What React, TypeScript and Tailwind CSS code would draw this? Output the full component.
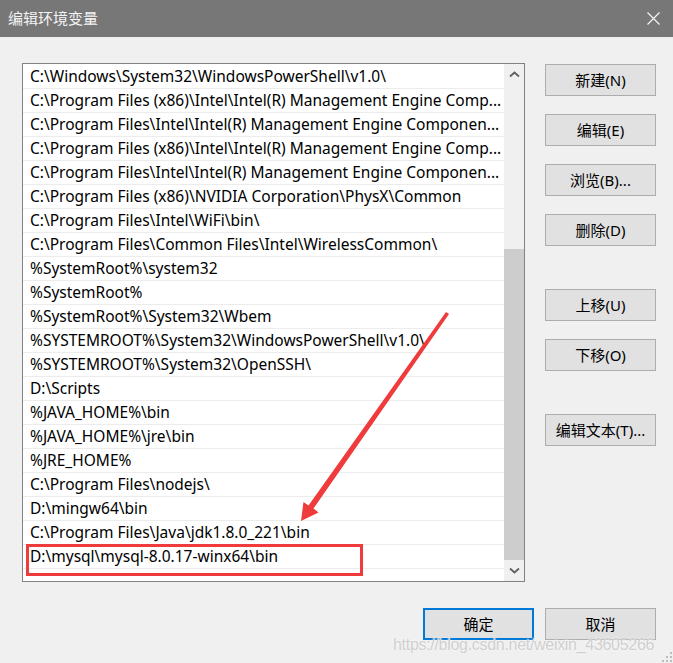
import React from 'react';

const paths: string[] = [
  'C:\\Windows\\System32\\WindowsPowerShell\\v1.0\\',
  'C:\\Program Files (x86)\\Intel\\Intel(R) Management Engine Comp...',
  'C:\\Program Files\\Intel\\Intel(R) Management Engine Componen...',
  'C:\\Program Files (x86)\\Intel\\Intel(R) Management Engine Comp...',
  'C:\\Program Files\\Intel\\Intel(R) Management Engine Componen...',
  'C:\\Program Files (x86)\\NVIDIA Corporation\\PhysX\\Common',
  'C:\\Program Files\\Intel\\WiFi\\bin\\',
  'C:\\Program Files\\Common Files\\Intel\\WirelessCommon\\',
  '%SystemRoot%\\system32',
  '%SystemRoot%',
  '%SystemRoot%\\System32\\Wbem',
  '%SYSTEMROOT%\\System32\\WindowsPowerShell\\v1.0\\',
  '%SYSTEMROOT%\\System32\\OpenSSH\\',
  'D:\\Scripts',
  '%JAVA_HOME%\\bin',
  '%JAVA_HOME%\\jre\\bin',
  '%JRE_HOME%',
  'C:\\Program Files\\nodejs\\',
  'D:\\mingw64\\bin',
  'C:\\Program Files\\Java\\jdk1.8.0_221\\bin',
  'D:\\mysql\\mysql-8.0.17-winx64\\bin',
];

const font = { fontFamily: '"Noto Sans", "Noto Sans CJK SC", sans-serif' };

const DialogButton: React.FC<{ label: string; primary?: boolean; className?: string }> = ({
  label,
  primary,
  className = '',
}) => (
  <button
    className={`w-[111px] h-[32px] bg-[#e1e1e1] text-[15px] text-black flex items-center justify-center ${
      primary ? 'border-2 border-[#0078d7]' : 'border border-[#adadad]'
    } ${className}`}
  >
    {label}
  </button>
);

const Chevron: React.FC<{ down?: boolean }> = ({ down }) => (
  <svg width="11" height="7" viewBox="0 0 11 7">
    <path
      d={down ? 'M1 1.5 L5.5 5.5 L10 1.5' : 'M1 5.5 L5.5 1.5 L10 5.5'}
      fill="none"
      stroke="#606060"
      strokeWidth="1.8"
    />
  </svg>
);

export default function App() {
  return (
    <div className="relative w-[673px] h-[663px] bg-[#f0f0f0] overflow-hidden" style={font}>
      {/* Title bar */}
      <div className="h-[37px] bg-[#777777] flex items-center justify-between pl-2 pr-[13px]">
        <span className="text-[15px] text-[#f4f4f4]">编辑环境变量</span>
        <svg width="13" height="13" viewBox="0 0 13 13">
          <path d="M0.5 0.5 L12.5 12.5 M12.5 0.5 L0.5 12.5" stroke="#f4f4f4" strokeWidth="1.2" />
        </svg>
      </div>

      <div className="flex pl-[22px] pt-[26px]">
        {/* Path list */}
        <div className="w-[503px] h-[519px] border border-[#828282] bg-white flex">
          <div className="flex-1 pt-px min-w-0">
            {paths.map((p, i) => (
              <div
                key={i}
                className="h-6 border-b border-[#ececec] pl-[7px] pr-px pt-px flex items-center text-[15.5px] text-black whitespace-nowrap overflow-hidden"
              >
                {p}
              </div>
            ))}
          </div>
          <div className="w-[20px] bg-[#f0f0f0] flex flex-col">
            <div className="h-[21px] flex items-center justify-center">
              <Chevron />
            </div>
            <div className="h-[164px]" />
            <div className="flex-1 bg-[#cdcdcd]" />
            <div className="h-[21px] flex items-center justify-center">
              <Chevron down />
            </div>
          </div>
        </div>

        {/* Side buttons */}
        <div className="ml-[20px] pt-px flex flex-col">
          <DialogButton label="新建(N)" />
          <DialogButton label="编辑(E)" className="mt-[18px]" />
          <DialogButton label="浏览(B)..." className="mt-[18px]" />
          <DialogButton label="删除(D)" className="mt-[18px]" />
          <DialogButton label="上移(U)" className="mt-[43px]" />
          <DialogButton label="下移(O)" className="mt-[18px]" />
          <DialogButton label="编辑文本(T)..." className="mt-[43px]" />
        </div>
      </div>

      {/* Bottom buttons */}
      <div className="flex justify-end gap-[11px] pr-[17px] mt-[26px]">
        <DialogButton label="确定" primary />
        <DialogButton label="取消" />
      </div>

      {/* Annotation: red box */}
      <div className="absolute left-[26px] top-[544px] w-[337px] h-[32px] border-[3px] border-[#ef3b3b]" />

      {/* Annotation: arrow */}
      <svg className="absolute left-0 top-0 pointer-events-none" width="673" height="663">
        <polygon
          points="446,312 449,314 313.5,508.5 318.5,512.5 301,521 303.5,502 308.5,505.5"
          fill="#ef3b3b"
        />
      </svg>

      {/* Watermark */}
      <div
        className="absolute left-[393px] top-[633px] text-[16px] tracking-[-0.3px] text-[#cfcfcf] whitespace-nowrap"
        style={{ fontFamily: '"Liberation Sans", Arial, sans-serif', textShadow: '0 0 2px #ffffff' }}
      >
        https://blog.csdn.net/weixin_43605266
      </div>

      {/* Resize grip */}
      <svg className="absolute right-[1px] bottom-[1px]" width="10" height="10" viewBox="0 0 10 10">
        <rect x="8" y="0" width="2" height="2" fill="#bcbcbc" />
        <rect x="4" y="4" width="2" height="2" fill="#bcbcbc" />
        <rect x="8" y="4" width="2" height="2" fill="#bcbcbc" />
        <rect x="0" y="8" width="2" height="2" fill="#bcbcbc" />
        <rect x="4" y="8" width="2" height="2" fill="#bcbcbc" />
        <rect x="8" y="8" width="2" height="2" fill="#bcbcbc" />
      </svg>
    </div>
  );
}
